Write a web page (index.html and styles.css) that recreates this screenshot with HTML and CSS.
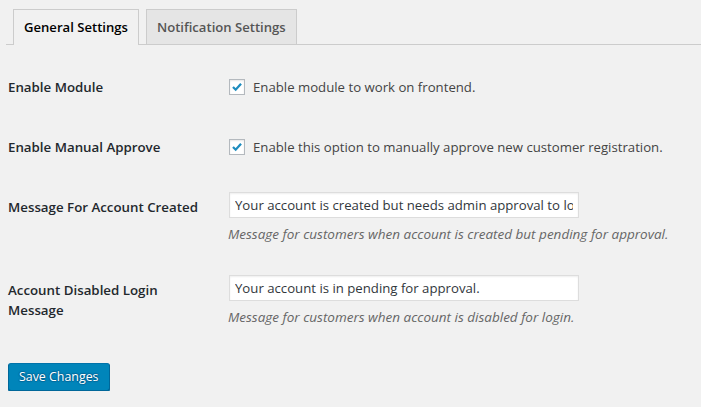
FILE: index.html
```html
<!DOCTYPE html>
<html>
<head>
<meta charset="utf-8">
<link rel="stylesheet" href="styles.css">
</head>
<body>
<div class="wrap">
  <h2 class="nav-tab-wrapper">
    <a class="nav-tab nav-tab-active">General Settings</a>
    <a class="nav-tab">Notification Settings</a>
  </h2>
  <form class="settings">
    <div class="row row-check">
      <div class="th">Enable Module</div>
      <div class="td">
        <label class="check-label"><span class="checkbox"><svg viewBox="0 0 16 16" width="16" height="16"><path d="M3.4 8 L6.5 11.1 L12.6 4.3" fill="none" stroke="#1e8cbe" stroke-width="2.6" stroke-linecap="butt"/></svg></span>Enable module to work on frontend.</label>
      </div>
    </div>
    <div class="row row-check">
      <div class="th">Enable Manual Approve</div>
      <div class="td">
        <label class="check-label"><span class="checkbox"><svg viewBox="0 0 16 16" width="16" height="16"><path d="M3.4 8 L6.5 11.1 L12.6 4.3" fill="none" stroke="#1e8cbe" stroke-width="2.6" stroke-linecap="butt"/></svg></span>Enable this option to manually approve new customer registration.</label>
      </div>
    </div>
    <div class="row row-text">
      <div class="th">Message For Account Created</div>
      <div class="td">
        <input class="regular-text" type="text" value="Your account is created but needs admin approval to login.">
        <p class="description">Message for customers when account is created but pending for approval.</p>
      </div>
    </div>
    <div class="row row-text">
      <div class="th">Account Disabled Login Message</div>
      <div class="td">
        <input class="regular-text" type="text" value="Your account is in pending for approval.">
        <p class="description">Message for customers when account is disabled for login.</p>
      </div>
    </div>
    <div class="submit">
      <button type="button" class="button-primary">Save Changes</button>
    </div>
  </form>
</div>
</body>
</html>
```

FILE: styles.css
```css
html, body {
  margin: 0;
  padding: 0;
  background: #f1f1f1;
}
body {
  font-family: "Open Sans", "Noto Sans", sans-serif;
  font-size: 13px;
  color: #444;
}
.wrap {
  padding: 0 0 0 6px;
}
.nav-tab-wrapper {
  margin: 0;
  padding-top: 9px;
  border-bottom: 1px solid #ccc;
  display: flex;
  align-items: flex-end;
  font-size: 13.1px;
  line-height: 24px;
  font-weight: 600;
}
.nav-tab {
  margin-left: 7px;
  padding: 5px 10px;
  border: 1px solid #ccc;
  border-bottom: none;
  background: #e5e5e5;
  color: #555;
  margin-bottom: 0;
  height: 24px;
}
.nav-tab-active {
  background: #f1f1f1;
  color: #000;
  margin-bottom: -1px;
  padding-bottom: 6px;
}
.settings {
  padding-top: 12px;
  padding-left: 2px;
}
.row {
  display: flex;
}
.th {
  width: 200px;
  padding: 20px 20px 20px 0;
  font-size: 13.3px;
  line-height: 20px;
  font-weight: 600;
  color: #23282d;
}
.td {
  padding: 15px 0;
  font-size: 13.2px;
  line-height: 20px;
}
.row-check .td {
  padding-top: 20px;
}
.check-label {
  display: flex;
  align-items: center;
  color: #444;
}
.checkbox {
  width: 16px;
  height: 16px;
  box-sizing: border-box;
  border: 1px solid #b4b9be;
  background: #fff;
  box-shadow: inset 0 1px 2px rgba(0,0,0,.1);
  margin: 0 8px 0 1px;
  display: flex;
  align-items: center;
  justify-content: center;
}
.checkbox svg {
  display: block;
}
.row-text .td {
  padding-top: 15px;
  padding-bottom: 16px;
}
.regular-text {
  display: block;
  width: 350px;
  height: 26px;
  box-sizing: border-box;
  margin: 0 0 0 1px;
  padding: 2px 5px;
  border: 1px solid #ddd;
  box-shadow: inset 0 1px 2px rgba(0,0,0,.07);
  background: #fff;
  color: #32373c;
  font-family: "Open Sans", "Noto Sans", sans-serif;
  font-size: 13.2px;
  outline: none;
}
.description {
  margin: 6px 0 0 0;
  font-size: 13.5px;
  line-height: 20px;
  font-style: italic;
  color: #666;
}
.submit {
  padding: 20px 0 0 0;
}
.button-primary {
  height: 28px;
  padding: 0 10px 1px;
  line-height: 26px;
  font-family: "Open Sans", "Noto Sans", sans-serif;
  font-size: 12.4px;
  color: #fff;
  background: #0085ba;
  border: 1px solid;
  border-color: #0073aa #006799 #006799;
  border-radius: 3px;
  box-shadow: 0 1px 0 #006799;
  text-shadow: 0 -1px 1px #006799, 1px 0 1px #006799, 0 1px 1px #006799, -1px 0 1px #006799;
}
```
